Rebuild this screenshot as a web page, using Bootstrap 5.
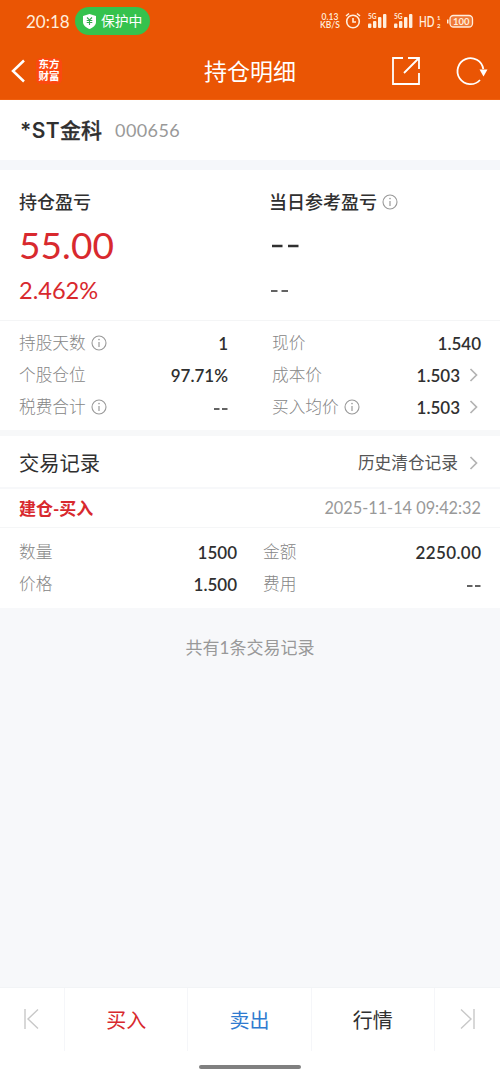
<!DOCTYPE html>
<html lang="zh-CN">
<head>
<meta charset="utf-8">
<meta name="viewport" content="width=device-width, initial-scale=1">
<title>持仓明细</title>
<link href="https://cdn.jsdelivr.net/npm/bootstrap@5.3.0/dist/css/bootstrap.min.css" rel="stylesheet">
<style>
body{font-family:Lato,"Noto Sans CJK SC",sans-serif;background:#f7f8fa;color:#303030;line-height:1;font-size:17px}
svg{display:block;flex:none}
.page{height:1083px;width:500px;overflow:hidden}
.topbar{background:#ea5504;height:100px;color:#fff;border-bottom:1px solid #f0600f}
.status{height:42px;padding:0 25px 0 25px;color:#ffeedd}
.clock{font-size:17px;width:50px;padding-left:1px}
.guard{background:#35c24d;width:75px;height:28px;color:#fff;font-size:13.8px;padding-left:8px;gap:5px}
.net{font-size:8.5px;line-height:8px;width:22px;text-align:center;white-space:nowrap;font-weight:600}
.appbar{height:58px}
.brand-tile{width:26px;height:26px;background:#fb4810;border-radius:5px;font-size:10.5px;line-height:12px;font-weight:700;left:36px;top:16px}
.screen-title{font-size:23px}
.name-row{height:60px;padding:0 20px}
.stock{font-size:21px;font-weight:600;font-family:Inter,"Noto Sans CJK SC",sans-serif;white-space:nowrap}
.st{letter-spacing:.4px}
.hanzi{font-weight:500}
.hanzi{-webkit-text-stroke:.3px currentColor}
.code{font-size:18px;letter-spacing:.4px;color:#999;margin-left:13px}
.gap-lg{height:10px;background:#f5f7fa}
.gap-sm{height:6px;background:#f7f8f9}
.gap-xs{height:2px;background:#f7f8fa}
.px-page{padding-left:19px;padding-right:19px}
.summary{height:151px;border-bottom:1px solid #f4f5f6}
.summary-col{width:250px;flex:none;padding-top:22px}
.head{font-size:18px;font-weight:500;height:19px;gap:5px}
.up{color:#d8292e}
.big{font-size:37px;letter-spacing:.1px;height:38px;margin-top:15px;line-height:37px}
.mid{font-size:23.6px;height:26px;margin-top:13px;line-height:26px}
.lab{color:#868686;gap:5px;font-size:16.7px;font-weight:300;padding-top:1px}
.val{font-weight:600;color:#303030}
.wide{letter-spacing:.4px;margin-right:-.4px}
.line32{height:32px}
.stats{height:109px;padding-top:6px}
.left-stats{width:209px}
.right-stats{margin-left:44px}
.left-trade{width:218px}
.right-trade{margin-left:26px}
.chev{margin-left:7px}
.sect{height:51px}
.sect-title{font-size:20.3px}
.more{color:#555;font-size:16.7px;padding-top:3px;margin-right:2px}
.more+.chev{margin-left:7px;margin-top:3px}
.trade-head{height:39px;border-bottom:1px solid #f5f6f7}
.when{color:#999;font-size:16.3px;white-space:nowrap}
.trade-body{height:80px;padding-top:8px}
.note{color:#999;margin-top:31px;font-size:17px}
.dock{height:96px;background:#fff;border-top:1px solid #f2f4f6}
.dock-row{height:63px;font-size:20px}
.dock-row>*{border-right:1px solid #f5f6f9}
.dock-row>:last-child{border:0}
.sell{color:#2f7bd0}
.edge{width:65px;padding-bottom:2px}
.homebar{width:102px;height:4px;background:#808080;margin-top:14px}
</style>
</head>
<body>
<svg width="0" height="0" class="position-absolute">
<symbol id="info" viewBox="0 0 16 16"><circle cx="8" cy="8" r="7" fill="none" stroke="#999" stroke-width="1.1"/><path d="M8 7v5" stroke="#999" stroke-width="1.2"/><circle cx="8" cy="4.6" r=".8" fill="#999"/></symbol>
<symbol id="chev" viewBox="0 0 14 16"><path d="M3.500 2l6 6-6 6" fill="none" stroke="#b3b3b3" stroke-width="1.7"/></symbol>
<symbol id="dashes" viewBox="0 0 14 6"><path d="M0 3h5.500M8 3h5.500" stroke="#303030" stroke-width="1.7"/></symbol>
</svg>
<div class="page d-flex flex-column">
<header class="topbar">
 <div class="status d-flex align-items-center">
  <span class="clock">20:18</span>
  <span class="guard rounded-pill d-flex align-items-center"><svg width="13" height="15" viewBox="0 0 13 15"><path d="M6.500 0L13 2v6c0 3.500-3 5.500-6.500 7C3 13.500 0 11.500 0 8V2z" fill="#fff"/><path d="M4 3.500l2.500 2.500L9 3.500M3.700 6.500h5.600M3.700 8.500h5.600M6.500 6v5" fill="none" stroke="#35a94d" stroke-width="1.100"/></svg><span>保护中</span></span>
  <span class="ms-auto net">0.13<br>KB/S</span>
  <svg width="134" height="20" viewBox="0 0 134 20" fill="#ffeedd" font-family="Lato">
   <g fill="none" stroke="#ffeedd" stroke-width="1.6"><circle cx="12" cy="10.500" r="6.300"/><path d="M12 7v4h3M5 5l3-2.500M19 5l-3-2.500"/></g>
   <g id="sig"><text x="27" y="7.500" font-size="6.500" font-weight="700">5G</text><rect x="27" y="12.500" width="3.400" height="4.500" rx="1"/><rect x="32" y="10" width="3.400" height="7" rx="1"/><rect x="37" y="6" width="3.400" height="11" rx="1"/><rect x="42" y="3" width="3.400" height="14" rx="1"/></g>
   <use href="#sig" x="26"/>
   <text x="78" y="16.300" font-size="15" font-weight="600" textLength="15.500" lengthAdjust="spacingAndGlyphs">HD</text>
   <text x="96" y="9" font-size="6" font-weight="700">1</text><text x="96" y="16.800" font-size="6" font-weight="700">2</text>
   <rect x="109" y="4.500" width="22.500" height="11.500" rx="3.500" fill="#f07a38" stroke="#ffeedd" stroke-width="1.300"/><path d="M106 8.500h1.500v4H106z"/>
   <text x="120.300" y="13.700" font-size="9.500" font-weight="700" text-anchor="middle">100</text>
  </svg>
 </div>
 <div class="appbar position-relative d-flex align-items-center justify-content-between">
  <svg class="ms-2" width="20" height="28" viewBox="0 0 20 28"><path d="M16 3.500L5 14l11 10.500" fill="none" stroke="#fff" stroke-width="2.500"/></svg>
  <span class="brand-tile position-absolute text-center">东方<br>财富</span>
  <span class="screen-title position-absolute start-50 top-50 translate-middle text-nowrap">持仓明细</span>
  <svg width="110" height="32" viewBox="0 0 110 32" fill="none" stroke="#fff" stroke-width="1.800"><path d="M13 3H3v26h26V18M18 3h11v11M29 3L14 18"/><path d="M90 25A13 13 0 1 1 93.300 14"/><path d="M89.500 14.500h8l-4 7z" fill="#fff" stroke="none"/></svg>
 </div>
</header>
<section class="name-row bg-white d-flex align-items-center"><span class="stock"><span class="st">*ST</span><span class="hanzi">金科</span></span><span class="code">000656</span></section>
<div class="gap-lg"></div>
<section class="summary bg-white px-page d-flex">
 <div class="summary-col"><div class="head d-flex align-items-center">持仓盈亏</div><div class="big up">55.00</div><div class="mid up">2.462%</div></div>
 <div class="summary-col"><div class="head d-flex align-items-center">当日参考盈亏<svg width="16" height="16"><use href="#info"/></svg></div>
 <div class="big"><svg width="32" height="38"><path d="M3 20h10.500M19 20h10.500" stroke="#303030" stroke-width="2.600"/></svg></div>
 <div class="mid"><svg width="22" height="26"><path d="M2 14h6.500M12.500 14h6.500" stroke="#303030" stroke-width="1.700"/></svg></div></div>
</section>
<section class="stats bg-white px-page d-flex">
 <div class="left-stats">
  <div class="line32 d-flex align-items-center justify-content-between"><span class="lab d-flex align-items-center">持股天数<svg width="16" height="16"><use href="#info"/></svg></span><span class="val">1</span></div>
  <div class="line32 d-flex align-items-center justify-content-between"><span class="lab">个股仓位</span><span class="val">97.71%</span></div>
  <div class="line32 d-flex align-items-center justify-content-between"><span class="lab d-flex align-items-center">税费合计<svg width="16" height="16"><use href="#info"/></svg></span><svg class="mt-1" width="14" height="6"><use href="#dashes"/></svg></div>
 </div>
 <div class="flex-grow-1 right-stats">
  <div class="line32 d-flex align-items-center justify-content-between"><span class="lab">现价</span><span class="val">1.540</span></div>
  <div class="line32 d-flex align-items-center"><span class="lab">成本价</span><span class="val ms-auto">1.503</span><svg class="chev" width="14" height="16"><use href="#chev"/></svg></div>
  <div class="line32 d-flex align-items-center"><span class="lab d-flex align-items-center">买入均价<svg width="16" height="16"><use href="#info"/></svg></span><span class="val ms-auto">1.503</span><svg class="chev" width="14" height="16"><use href="#chev"/></svg></div>
 </div>
</section>
<div class="gap-sm"></div>
<section class="sect bg-white px-page d-flex align-items-center"><span class="sect-title pt-1">交易记录</span><span class="more ms-auto">历史清仓记录</span><svg class="chev" width="14" height="16"><use href="#chev"/></svg></section>
<div class="gap-xs"></div>
<section class="trade-head bg-white px-page d-flex align-items-center justify-content-between"><span class="up fw-bold">建仓-买入</span><span class="when">2025-11-14 09:42:32</span></section>
<section class="trade-body bg-white px-page d-flex">
 <div class="left-trade">
  <div class="line32 d-flex align-items-center justify-content-between"><span class="lab">数量</span><span class="val">1500</span></div>
  <div class="line32 d-flex align-items-center justify-content-between"><span class="lab">价格</span><span class="val">1.500</span></div>
 </div>
 <div class="flex-grow-1 right-trade">
  <div class="line32 d-flex align-items-center justify-content-between"><span class="lab">金额</span><span class="val wide">2250.00</span></div>
  <div class="line32 d-flex align-items-center justify-content-between"><span class="lab">费用</span><svg class="mt-1" width="14" height="6"><use href="#dashes"/></svg></div>
 </div>
</section>
<div class="note text-center">共有1条交易记录</div>
<footer class="dock mt-auto">
 <div class="dock-row d-flex text-center">
  <span class="edge d-flex align-items-center justify-content-center"><svg width="18" height="22" viewBox="0 0 18 22" fill="none" stroke="#c8c8c8" stroke-width="1.400"><path d="M2 1v20M15 1.500L5 11l10 9.500"/></svg></span>
  <span class="col d-flex align-items-center justify-content-center up">买入</span>
  <span class="col d-flex align-items-center justify-content-center sell">卖出</span>
  <span class="col d-flex align-items-center justify-content-center">行情</span>
  <span class="edge d-flex align-items-center justify-content-center"><svg width="18" height="22" viewBox="0 0 18 22" fill="none" stroke="#c8c8c8" stroke-width="1.400"><path d="M16 1v20M3 1.500L13 11 3 20.500"/></svg></span>
 </div>
 <div class="homebar rounded-pill mx-auto"></div>
</footer>
</div>
<script src="https://cdn.jsdelivr.net/npm/bootstrap@5.3.0/dist/js/bootstrap.bundle.min.js"></script>
</body>
</html>
